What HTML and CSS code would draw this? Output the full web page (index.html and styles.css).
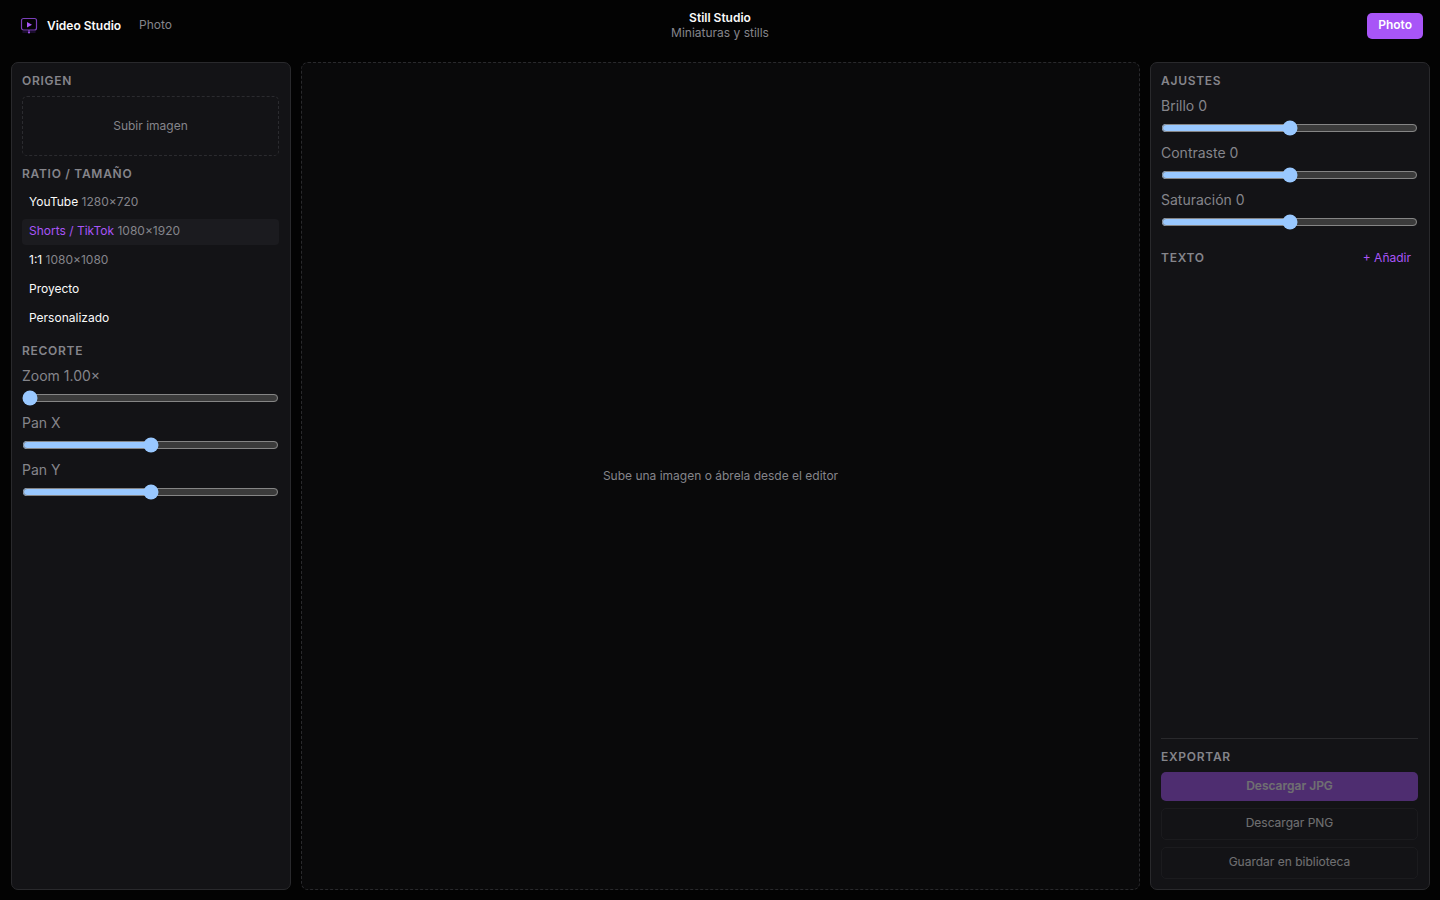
FILE: index.html
```html
<!DOCTYPE html>
<html lang="es">
<head>
  <meta charset="UTF-8" />
  <meta name="viewport" content="width=device-width, initial-scale=1.0"/>
  <title>Video Studio – Photo</title>
  <link rel="stylesheet" href="styles.css">
</head>
<body>
  <header class="topbar">
    <div class="brand">
      <svg class="logo" viewBox="0 0 18 18" fill="none">
        <rect x="1.5" y="1.5" width="15" height="11.5" rx="2" stroke="#7a3fba" stroke-width="1.2"/>
        <path d="M7 5v5.500l5-2.750z" fill="#a855f7"/>
        <path d="M9 13v3" stroke="#8b45d6" stroke-width="1.2"/>
        <path d="M2.500 15h13" stroke="#34195a" stroke-width="1"/>
        <circle cx="9" cy="15.500" r="1" fill="#a855f7"/>
      </svg>
      <strong>Video Studio</strong>
      <a class="crumb" href="#">Photo</a>
    </div>
    <div class="heading">
      <h1>Still Studio</h1>
      <p>Miniaturas y stills</p>
    </div>
    <div class="actions">
      <button class="mode-btn">Photo</button>
    </div>
  </header>

  <main class="workspace">
    <aside class="panel">
      <section>
        <h2>Origen</h2>
        <button class="upload">Subir imagen</button>
      </section>
      <section>
        <h2>Ratio / Tamaño</h2>
        <div class="presets">
          <button class="preset">YouTube <span>1280×720</span></button>
          <button class="preset active">Shorts / TikTok <span>1080×1920</span></button>
          <button class="preset">1:1 <span>1080×1080</span></button>
          <button class="preset">Proyecto</button>
          <button class="preset">Personalizado</button>
        </div>
      </section>
      <section>
        <h2>Recorte</h2>
        <div class="sliders">
          <div class="field">
            <label for="zoom">Zoom 1.00×</label>
            <input type="range" id="zoom" min="1" max="4" step="0.01" value="1">
          </div>
          <div class="field">
            <label for="panx">Pan X</label>
            <input type="range" id="panx" min="-100" max="100" value="0">
          </div>
          <div class="field">
            <label for="pany">Pan Y</label>
            <input type="range" id="pany" min="-100" max="100" value="0">
          </div>
        </div>
      </section>
    </aside>

    <section class="stage">
      <p>Sube una imagen o ábrela desde el editor</p>
    </section>

    <aside class="panel">
      <section>
        <h2>Ajustes</h2>
        <div class="sliders">
          <div class="field">
            <label for="brillo">Brillo 0</label>
            <input type="range" id="brillo" min="-100" max="100" value="0">
          </div>
          <div class="field">
            <label for="contraste">Contraste 0</label>
            <input type="range" id="contraste" min="-100" max="100" value="0">
          </div>
          <div class="field">
            <label for="saturacion">Saturación 0</label>
            <input type="range" id="saturacion" min="-100" max="100" value="0">
          </div>
        </div>
      </section>
      <section class="text-head">
        <h2>Texto</h2>
        <button class="add-btn">+ Añadir</button>
      </section>
      <section class="export">
        <h2>Exportar</h2>
        <button class="export-btn primary" disabled>Descargar JPG</button>
        <button class="export-btn" disabled>Descargar PNG</button>
        <button class="export-btn" disabled>Guardar en biblioteca</button>
      </section>
    </aside>
  </main>
</body>
</html>
```

FILE: styles.css
```css
* {
  margin: 0;
  padding: 0;
  box-sizing: border-box;
}

:root {
  color-scheme: dark;
}

body {
  height: 100vh;
  display: flex;
  flex-direction: column;
  background: #030303;
  color: #fafafa;
  font-family: Inter, 'Liberation Sans', sans-serif;
  font-size: 12px;
  line-height: 16px;
}

button {
  font: inherit;
  color: inherit;
  background: none;
  border: none;
  cursor: pointer;
}

.topbar {
  display: grid;
  grid-template-columns: 1fr auto 1fr;
  align-items: center;
  height: 52px;
  padding: 0 17px;
}

.brand {
  display: flex;
  align-items: center;
  padding-left: 3px;
}

.brand strong {
  margin: 0 18px 0 9px;
  font-weight: 600;
}

.logo {
  width: 18px;
  height: 18px;
}

.crumb {
  padding-bottom: 2px;
  color: #85858b;
  text-decoration: none;
}

.heading {
  padding-bottom: 2px;
  text-align: center;
  line-height: 15px;
}

.heading h1 {
  font-size: 12px;
  font-weight: 600;
}

.heading p {
  color: #85858b;
}

.actions {
  display: flex;
  justify-content: flex-end;
}

.mode-btn {
  height: 26px;
  padding: 0 11px 2px;
  border-radius: 5px;
  background: #a855f7;
  color: #fff;
  font-weight: 600;
}

.workspace {
  flex: 1;
  min-height: 0;
  display: grid;
  grid-template-columns: 280px 1fr 280px;
  gap: 10px;
  padding: 10px 10px 10px 11px;
}

.panel {
  display: flex;
  flex-direction: column;
  gap: 10px;
  padding: 10px 11px 10px 10px;
  background: #131316;
  border: 1px solid #29292c;
  border-radius: 7px;
}

h2 {
  margin-bottom: 7px;
  color: #85858b;
  font-size: 12px;
  font-weight: 600;
  letter-spacing: 0.06em;
  text-transform: uppercase;
}

.upload {
  display: block;
  width: 100%;
  height: 60px;
  border: 1px dashed #2b2b2f;
  border-radius: 5px;
  color: #85858b;
}

.presets {
  display: flex;
  flex-direction: column;
  gap: 3px;
  padding: 1px 0;
}

.preset {
  height: 26px;
  padding: 0 7px 2px;
  border-radius: 4px;
  text-align: left;
}

.preset span {
  color: #85858b;
}

.preset.active {
  background: #1b1b1f;
  color: #a855f7;
}

.sliders {
  display: flex;
  flex-direction: column;
  gap: 7px;
}

.field {
  display: flex;
  flex-direction: column;
  gap: 4px;
  color: #85858b;
  font-size: 14px;
  line-height: 20px;
}

.field input {
  width: 100%;
  height: 16px;
}

.stage {
  display: flex;
  align-items: center;
  justify-content: center;
  background: #09090a;
  border: 1px dashed #29292c;
  border-radius: 7px;
  color: #85858b;
}

.text-head {
  display: flex;
  align-items: center;
  justify-content: space-between;
  margin-top: 5px;
}

.text-head h2 {
  margin-bottom: 0;
}

.add-btn {
  height: 26px;
  padding: 0 7px;
  color: #a855f7;
}

.export {
  display: flex;
  flex-direction: column;
  gap: 7px;
  margin-top: auto;
  padding-top: 10px;
  border-top: 1px solid #29292c;
}

.export h2 {
  margin-bottom: 0;
}

.export-btn {
  height: 32px;
  padding-bottom: 2px;
  border: 1px solid #29292c;
  border-radius: 5px;
  color: #fafafa;
}

.export-btn.primary {
  height: 29px;
  border: none;
  background: #a855f7;
  font-weight: 600;
}

.export-btn:disabled {
  opacity: 0.4;
  cursor: default;
}
```
